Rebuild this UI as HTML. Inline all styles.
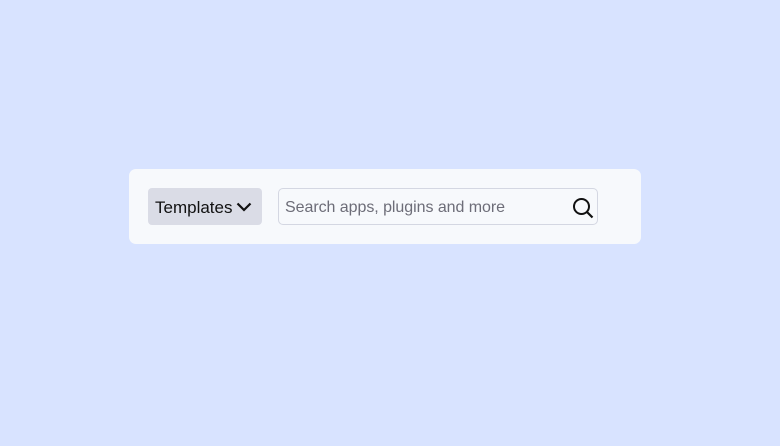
<!DOCTYPE html><html><head><style>
body{margin:0;width:780px;height:446px;background:#d8e3ff;position:relative;font-family:"Liberation Sans",sans-serif;overflow:hidden}
.card{position:absolute;left:129px;top:169px;width:512px;height:75px;background:#f7f9fc;border-radius:7px}
.btn{position:absolute;left:148px;top:188px;width:114px;height:37px;background:#dadce6;border-radius:4px;font-size:17px;color:#111;box-sizing:border-box;padding-left:7px;line-height:39px}
.btn svg{position:absolute;left:88px;top:14px}
.search{position:absolute;left:278px;top:188px;width:320px;height:37px;box-sizing:border-box;border:1px solid #d4d7e2;border-radius:5px;background:#f7f9fc;font-size:16px;letter-spacing:-0.05px;color:#6d6d78;line-height:38px;padding-left:6px}
.search svg{position:absolute;left:293px;top:8px}
</style></head><body>
<div class="card"></div>
<div class="btn">Templates<svg width="16" height="10" viewBox="0 0 16 10"><path d="M1.5 1.5L8 8L14.5 1.5" fill="none" stroke="#111" stroke-width="2.2"/></svg></div>
<div class="search">Search apps, plugins and more<svg width="22" height="22" viewBox="0 0 22 22"><circle cx="9.5" cy="9.5" r="7.5" fill="none" stroke="#111" stroke-width="2"/><path d="M15 15L20.5 20.5" stroke="#111" stroke-width="2.2"/></svg></div>
</body></html>
